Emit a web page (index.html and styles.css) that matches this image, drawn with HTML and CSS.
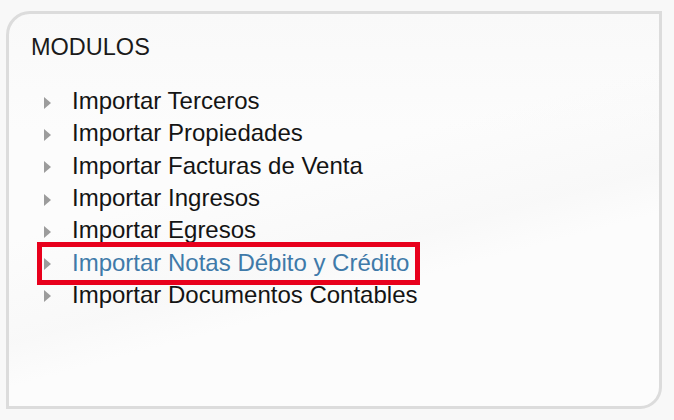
FILE: index.html
```
<!DOCTYPE html>
<html lang="es">
<head>
<meta charset="utf-8">
<title>Modulos</title>
<link rel="stylesheet" href="styles.css">
</head>
<body>
<div class="panel">
  <h2 class="title">MODULOS</h2>
  <ul class="menu">
    <li class="item">Importar Terceros</li>
    <li class="item">Importar Propiedades</li>
    <li class="item">Importar Facturas de Venta</li>
    <li class="item">Importar Ingresos</li>
    <li class="item">Importar Egresos</li>
    <li class="item item-active"><a class="link" href="#">Importar Notas Débito y Crédito</a><span class="highlight"></span></li>
    <li class="item">Importar Documentos Contables</li>
  </ul>
</div>
</body>
</html>
```
FILE: styles.css
```
html, body {
  margin: 0;
  padding: 0;
}
body {
  width: 674px;
  height: 420px;
  overflow: hidden;
  background: #f8f8f8;
  font-family: "Liberation Sans", Arial, Helvetica, sans-serif;
  padding: 11px 0 0 6px;
  box-sizing: border-box;
}
.panel {
  box-sizing: border-box;
  width: 656px;
  height: 398px;
  border: 3px solid #dcdcdc;
  border-radius: 24px 0 22px 0;
  background:
    linear-gradient(165deg, rgba(244,244,244,0) 40%, rgba(246,246,246,0.6) 58%, rgba(252,252,252,0) 66%),
    linear-gradient(180deg, #f9f9f9 0%, #fcfcfc 30%, #fcfcfc 100%);
  padding: 0 0 0 22px;
}
.title {
  margin: 20px 0 0 0;
  font-size: 23.5px;
  line-height: 26px;
  font-weight: normal;
  color: #1a1a1a;
}
.menu {
  list-style: none;
  margin: 25px 0 0 0;
  padding: 0 0 0 13px;
}
.item {
  position: relative;
  display: flex;
  align-items: center;
  gap: 21px;
  font-size: 24px;
  line-height: 32px;
  height: 32.3px;
  color: #141414;
}
.item::before {
  content: "";
  flex: none;
  width: 0;
  height: 0;
  border-top: 6px solid transparent;
  border-bottom: 6px solid transparent;
  border-left: 7px solid #9c9c9c;
  margin-top: 3px;
}
.link {
  color: #3f7aa9;
  text-decoration: none;
}
.highlight {
  position: absolute;
  left: -7px;
  top: -4px;
  width: 383px;
  height: 43px;
  box-sizing: border-box;
  border: 5px solid #e8001c;
}
```
